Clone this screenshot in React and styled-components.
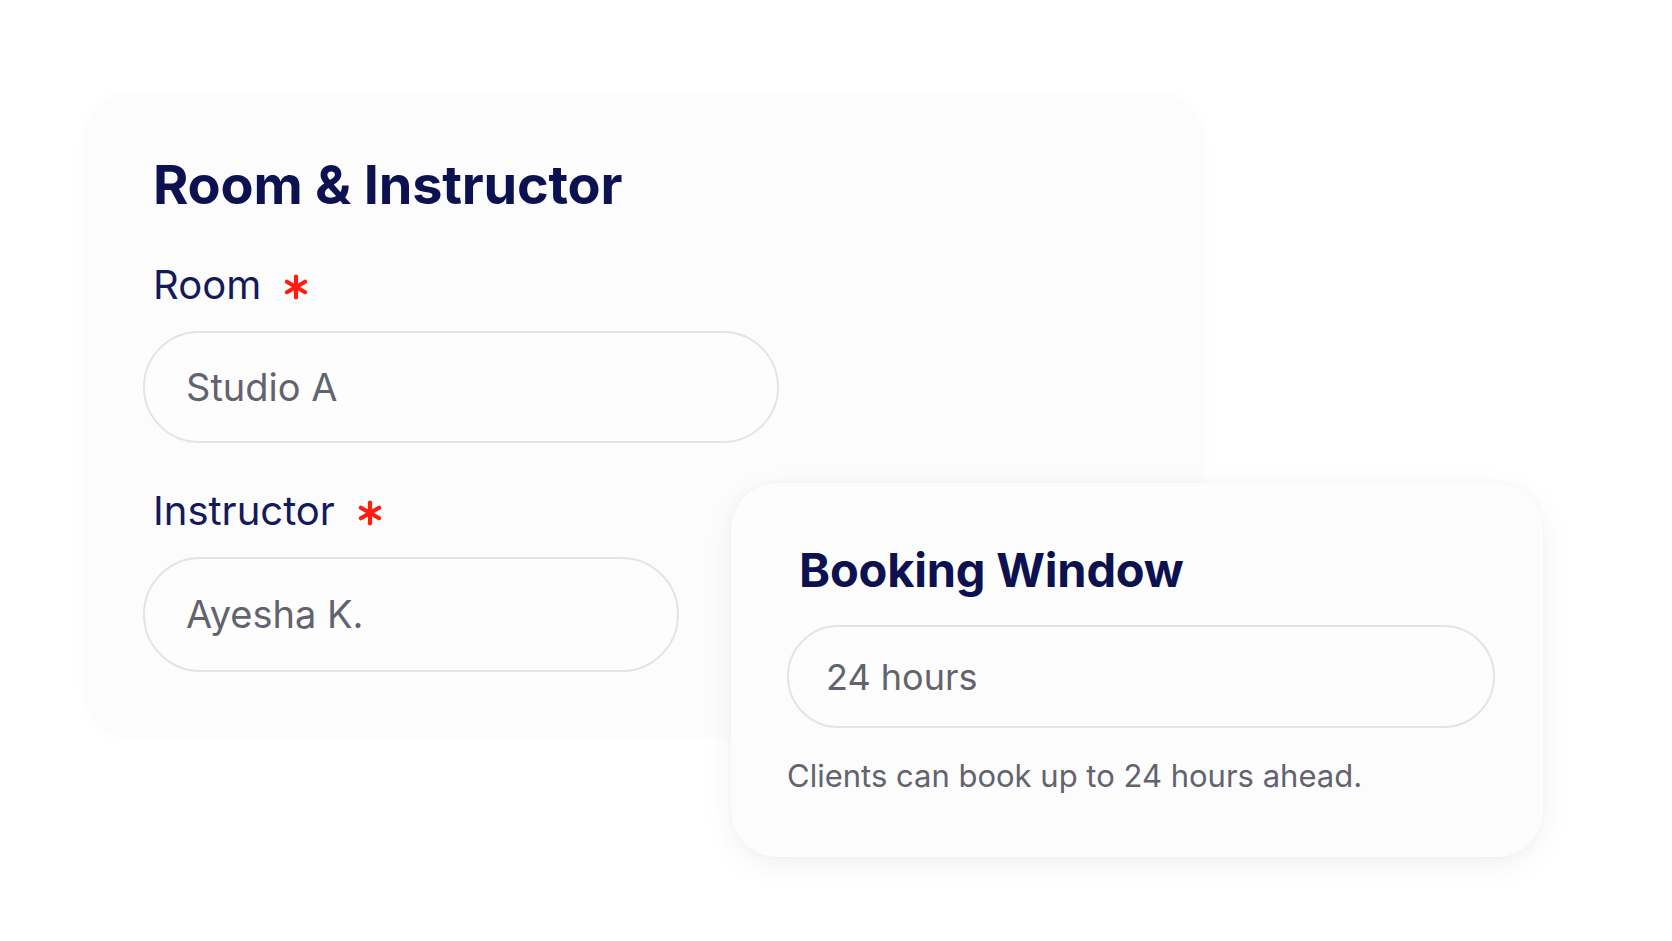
import React from "react";
import styled, { createGlobalStyle } from "styled-components";

const GlobalStyle = createGlobalStyle`
	html, body {
		margin: 0;
		padding: 0;
		background: #ffffff;
	}
	body {
		font-family: "Inter", "Liberation Sans", sans-serif;
	}
`;

const Page = styled.div`
	width: 1672px;
	height: 941px;
	box-sizing: border-box;
	padding: 98px 0 0 88px;
	display: grid;
	grid-template-columns: 643px 469px 343px;
	grid-template-rows: 385px 250px 124px;
`;

const Card = styled.section`
	background: #fcfcfd;
	box-sizing: border-box;
	display: flex;
	flex-direction: column;
	align-items: flex-start;
`;

const MainCard = styled(Card)`
	grid-column: 1 / 3;
	grid-row: 1 / 3;
	border-radius: 40px;
	padding: 55px 0 0 65px;
	box-shadow: 0 0 16px rgba(20, 24, 60, 0.035);
`;

const FloatCard = styled(Card)`
	grid-column: 2 / 4;
	grid-row: 2 / 4;
	z-index: 1;
	border-radius: 46px;
	padding: 59px 0 0 68px;
	box-shadow: 0 8px 30px rgba(20, 24, 60, 0.055), 0 0 6px rgba(20, 24, 60, 0.03);
`;

const Title = styled.h2`
	margin: 0;
	font-size: ${(p) => p.$size}px;
	font-weight: 700;
	line-height: 1.2;
	color: #0c1150;
	letter-spacing: -0.2px;
`;

const Label = styled.label`
	display: flex;
	align-items: center;
	gap: 21px;
	margin-top: ${(p) => p.$top}px;
	font-size: 40px;
	line-height: 1.2;
	color: #141a5a;
`;

const Star = styled.svg`
	width: 28px;
	height: 28px;
	margin-top: 4px;
	flex-shrink: 0;
`;

const Field = styled.div`
	box-sizing: border-box;
	width: ${(p) => p.$width}px;
	height: ${(p) => p.$height}px;
	margin: ${(p) => p.$top}px 0 0 ${(p) => p.$left}px;
	padding-left: ${(p) => p.$pad}px;
	display: flex;
	align-items: center;
	border: 2px solid #e3e4ea;
	border-radius: 999px;
	background: #fdfdfe;
	font-size: ${(p) => p.$font}px;
	color: #62636e;
`;

const Help = styled.p`
	margin: 29px 0 0 -12px;
	font-size: 31px;
	line-height: 1.2;
	color: #62636e;
`;

const RequiredMark = () => (
	<Star viewBox="0 0 24 24" fill="none" stroke="#ff1d12" strokeWidth="3.6" strokeLinecap="round">
		<path d="M12 3v18" />
		<path d="M4.2 7.5l15.6 9" />
		<path d="M4.2 16.5l15.6-9" />
	</Star>
);

export default function App() {
	return (
		<>
			<GlobalStyle />
			<Page>
				<MainCard>
					<Title $size={54}>Room &amp; Instructor</Title>
					<Label $top={43}>
						Room <RequiredMark />
					</Label>
					<Field $width={636} $height={112} $top={22} $left={-10} $pad={41} $font={38}>
						Studio A
					</Field>
					<Label $top={44}>
						Instructor <RequiredMark />
					</Label>
					<Field $width={536} $height={115} $top={22} $left={-10} $pad={41} $font={38}>
						Ayesha K.
					</Field>
				</MainCard>
				<FloatCard>
					<Title $size={47}>Booking Window</Title>
					<Field $width={708} $height={103} $top={27} $left={-12} $pad={37} $font={36}>
						24 hours
					</Field>
					<Help>Clients can book up to 24 hours ahead.</Help>
				</FloatCard>
			</Page>
		</>
	);
}
